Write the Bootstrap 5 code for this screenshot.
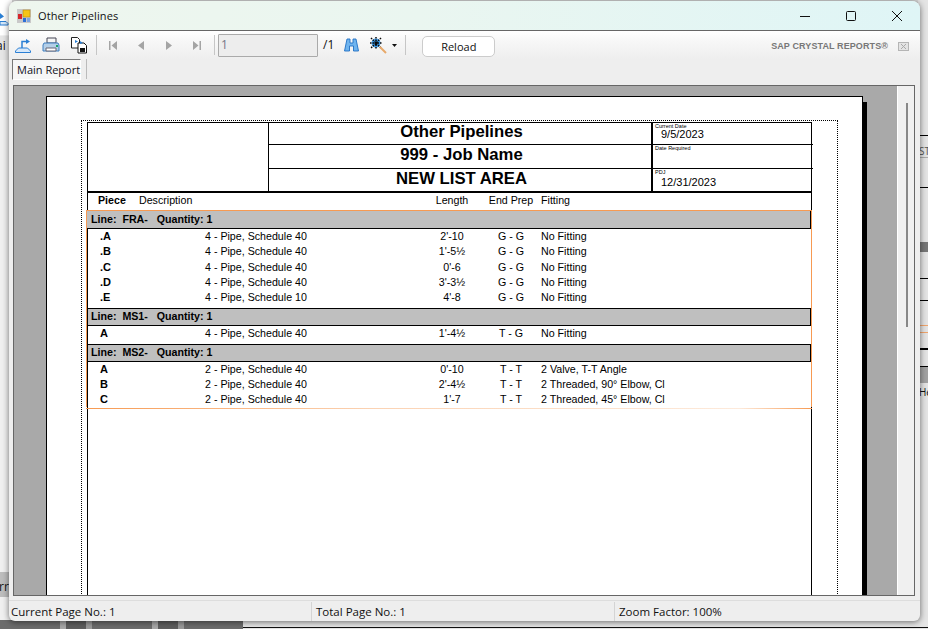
<!DOCTYPE html>
<html lang="en">
<head>
<meta charset="utf-8">
<title>Other Pipelines</title>
<link href="https://cdn.jsdelivr.net/npm/bootstrap@5.3.0/dist/css/bootstrap.min.css" rel="stylesheet">
<style>
html,body{margin:0;height:629px;overflow:hidden}
body{position:relative;width:928px;background:#d6d6d6;font-family:"Open Sans","Noto Sans",sans-serif;color:#111}
.desk-left{position:absolute;left:0;top:0;width:12px;height:629px;background:#f0f0f0;overflow:hidden}
.desk-left .seg{position:absolute;left:0;width:12px;font-size:12px;line-height:16px;overflow:hidden;white-space:nowrap}
.desk-right{position:absolute;right:0;top:0;width:10px;height:629px;background:#e4e4e4;overflow:hidden}
.desk-right i{position:absolute;left:0;width:10px;height:1px;background:#000;display:block}
.desk-right span{position:absolute;left:1px;font-size:10px;line-height:12px;white-space:nowrap}
.desk-bottom{position:absolute;left:0;right:0;top:620px;height:9px;background:linear-gradient(#e6e6e6 7px,#111 7px,#111 8px,#e6e6e6 8px)}
.desk-bottom-l{position:absolute;left:0;width:243px;top:620px;height:9px;background:repeating-linear-gradient(90deg,#6c6c6c 0 60px,#a8a8a8 60px 66px,#5e5e5e 66px 86px,#9a9a9a 86px 92px)}
.win{position:absolute;left:9px;top:1px;width:911px;height:620px;background:#eee;border-radius:8px 8px 6px 6px;overflow:hidden;box-shadow:0 1px 6px rgba(0,0,0,.55)}
.titlebar{height:30px;flex:none;background:linear-gradient(90deg,#eef6ee,#eaf6f0 45%,#dff5f6);border-bottom:1px solid #666;padding-left:8px;font-size:11px}
.appicon{width:14px;height:14px;margin-right:7px}
.titlebar .cap{line-height:30px;letter-spacing:.1px}
.wctl{width:46px;height:30px}
.tools{height:28px;flex:none;background:linear-gradient(#fff,#f7f7f7 35%,#eee);padding-left:4px;position:relative}
.ibtn{width:24px;height:24px;flex:none}
.tsep{width:1px;height:20px;background:#c6c6c6;flex:none}
.pageinput{width:100px;height:23px;margin-left:3px;border:1px solid #aaa;background:#ededed;color:#778;font-size:12px;line-height:20px;padding:0 2px;border-radius:1px;flex:none}
.pagetot{font-size:12px;margin:0 5px 0 5px;flex:none}
.btn.reload{width:73px;height:21px;margin:3px 0 0 16px;padding:0;background:#fff;border:1px solid #ccc;border-radius:5px;font:11px/19px "Open Sans",sans-serif;color:#111}
.brand{font:bold 9px/12px "Liberation Sans",sans-serif;color:#777;letter-spacing:.1px;white-space:nowrap;margin-top:2px}
.brand-x{width:11px;height:9px;margin:2px 11px 0 10px}
.tabrow{height:26px;flex:none;background:#eee;padding-left:3px;align-items:flex-start}
.maintab{width:69px;height:21px;border:1px solid #777;border-right-color:#fff;border-bottom-color:#fff;background:#f6f6f6;font-size:11px;line-height:19px;padding-left:4px;color:#112;white-space:nowrap}
.tabsep{width:1px;height:20px;background:#bbb;margin-left:5px}
.frame{height:511px;flex:none;margin:0 5px 0 4px;border:1px solid #666;background:#f0f0f0}
.canvas{width:884px;flex:none;background:#a9a9a9;border-right:1px solid #fff;padding:10px 0 0 32px;overflow:hidden}
.sbar{flex:1;padding-top:17px}
.sthumb{width:2px;height:224px;background:#888;margin-left:8px}
.sheet{width:817px;height:700px;background:#fff;border:1px solid #000;box-shadow:4px 6px 0 #000;padding:23px 0 0 34px;font-family:"Liberation Sans",Arial,sans-serif;color:#000;box-sizing:border-box}
.dots{width:757px;height:660px;border:1px dotted #000;padding:1px 0 0 5px}
.rep{width:725px;height:650px;border:solid #000;border-width:1px 1px 0 1px}
.rephead{height:70px;border-bottom:2px solid #000;display:grid;grid-template-columns:181px 384px 1fr;grid-template-rows:22px 24px 22px}
.hlogo{grid-row:1/4;border-right:1px solid #000}
.htitle{border-right:2px solid #000;border-bottom:1px solid #000;font-weight:700;font-size:16.7px;line-height:18px;text-align:center;white-space:nowrap;padding-left:3px}
.htitle.tall{line-height:20px}
.htitle.last{border-bottom:0;line-height:19px}
.hdate{position:relative;border-bottom:1px solid #000;margin-right:-2px}
.hdate.last{border-bottom:0;margin-right:0}
.hdate small{position:absolute;left:2px;top:0;font-size:5.5px;line-height:6px;white-space:nowrap}
.hdate b{position:absolute;left:8px;top:4px;font-weight:400;font-size:11px;line-height:14px}
.hdate.last b{top:6px}
.colhead{height:17px;font-size:10.67px;line-height:15px;display:grid;grid-template-columns:10px 41px 281px 64px 54px 1fr;white-space:nowrap}
.colhead b{font-weight:700}
.ctr{text-align:center}
.sect{margin-left:-2px;width:726px;border:solid #f79a52;border-width:1px 1px 0 1px}
.band{height:18px;background:#bfbfbf;border-bottom:1px solid #000;border-right:1px solid #000;font-weight:700;font-size:10.67px;line-height:17px;padding-left:4px;white-space:pre}
.band.ruled{border-top:1px solid #000;border-left:1px solid #000;line-height:15px;padding-left:3px}
.band.tail{height:18px}
.rw{height:15.25px;font-size:10.67px;line-height:15px;display:grid;grid-template-columns:118px 215px 64px 54px 1fr;white-space:nowrap}
.rw b{padding-left:13px;font-weight:700;font-size:11px}
.rw .fit{padding-left:3px}
.gap3{height:3px}
.gap2{height:2px}
.orange{height:1px;width:726px;margin-left:-2px;margin-top:1px;background:linear-gradient(90deg,#f79a52,#fbd3b4 40%,#fdeadb 90%,#f79a52)}
.status{flex:1;font-size:11.5px;margin-top:4px;border-top:1px solid #ddd}
.scell{height:19px;line-height:19px;padding-left:2px;border-right:1px solid #d4d4d4;margin-top:1px;white-space:nowrap}
.scell.a{width:303px}.scell.b{width:303px;padding-left:4px}.scell.c{flex:1;border:0;padding-left:4px}
</style>
</head>
<body>
<div class="desk-left">
  <div class="seg" style="top:0;height:35px;background:#fff">
    <svg width="9" height="16" viewBox="0 0 9 16" style="display:block;margin-top:11px"><path d="M0 14h8v-1.500l-2-2H0z" fill="#d6e8fa" stroke="#2a7fd4"/><path d="M0 2l4 3.500L0 8z" fill="#2a7fd4"/></svg>
  </div>
  <div class="seg" style="top:36px;height:24px;background:#e6e6e6">
    <span style="margin-left:-4px;line-height:20px">ai</span>
  </div>
  <div class="seg" style="top:572px;height:25px;background:#bdbdbd;line-height:30px"><span style="margin-left:-1px">rr</span></div>
</div>
<div class="desk-right">
  <i style="top:135px"></i><span style="top:145px;color:#555">ST</span><i style="top:157px;background:#aaa"></i><i style="top:187px"></i>
  <i style="top:242px;height:10px;background:#777"></i><i style="top:278px"></i><i style="top:300px"></i>
  <i style="top:325px;background:#f0a46b"></i><i style="top:332px;background:#f0a46b"></i><i style="top:348px;height:2px"></i>
  <i style="top:366px"></i><i style="top:367px;height:16px;background:#a2a2a2"></i><span style="top:386px">He</span>
</div>
<div class="desk-bottom"></div>
<div class="desk-bottom-l"></div>

<div class="win d-flex flex-column">
  <div class="titlebar d-flex align-items-center">
    <svg class="appicon" viewBox="0 0 14 14"><rect width="14" height="14" fill="#c9c9c9"/><rect x="6" y="1" width="7" height="7" fill="#f5c518" stroke="#b88a10" stroke-width=".6"/><rect x="1" y="5" width="4" height="5" fill="#d6262a"/><rect x="6" y="9" width="3" height="4" fill="#2b6fd6"/><rect x="10" y="9" width="3" height="4" fill="#7fa6e0"/></svg>
    <span class="cap flex-grow-1">Other Pipelines</span>
    <div class="wctl d-flex align-items-center justify-content-center"><svg width="12" height="12" viewBox="0 0 12 12"><path d="M1 6.500h10" stroke="#111" fill="none"/></svg></div>
    <div class="wctl d-flex align-items-center justify-content-center"><svg width="12" height="12" viewBox="0 0 12 12"><rect x="1.500" y="1.500" width="9" height="9" rx="1" stroke="#111" fill="none"/></svg></div>
    <div class="wctl d-flex align-items-center justify-content-center"><svg width="12" height="12" viewBox="0 0 12 12"><path d="M1 1l10 10M11 1L1 11" stroke="#111" fill="none"/></svg></div>
  </div>

  <div class="tools d-flex align-items-center">
    <div class="ibtn d-flex align-items-center justify-content-center" style="margin-left:-2px"><svg width="18" height="17" viewBox="0 0 18 17"><path d="M1.500 15.500h15v-1.500l-3-3h-9l-3 3z" fill="#d6e8fa" stroke="#2a7fd4"/><path d="M8 11V4.500h4" fill="none" stroke="#2a7fd4" stroke-width="1.500"/><path d="M12 2l4 2.500-4 2.500z" fill="#2a7fd4"/></svg></div>
    <div class="ibtn d-flex align-items-center justify-content-center" style="margin-left:4px"><svg width="18" height="16" viewBox="0 0 18 16"><path d="M5 1h9v5H5z" fill="#f6f6f6" stroke="#445"/><path d="M2 6h14l1 2v6H1V8z" fill="#b4cfe8" stroke="#3f7fbf"/><path d="M4 11h10v3H4z" fill="#fff" stroke="#667"/><rect x="14" y="8" width="2" height="2" fill="#1aa36a"/></svg></div>
    <div class="ibtn d-flex align-items-center justify-content-center" style="margin-left:4px"><svg width="18" height="18" viewBox="0 0 18 18"><path d="M1.500 1.500h6l2 2V12h-8z" fill="#fff" stroke="#222"/><path d="M8 7h6l2.500 2.500V17H8z" fill="#fff" stroke="#111"/><path d="M10 12h5v4h-5z" fill="#111"/><path d="M5 4l3 1.500L5 7z" fill="#2a7fd4"/><path d="M10 5l3 2-3 1z" fill="#2a7fd4"/></svg></div>
    <div class="tsep" style="margin-left:5px"></div>
    <div class="ibtn d-flex align-items-center justify-content-center" style="margin-left:2px;width:28px"><svg width="8" height="9" viewBox="0 0 8 9"><path d="M0 0h1.500v9H0zM8 0v9L2.500 4.500z" fill="#a4a4a4"/></svg></div>
    <div class="ibtn d-flex align-items-center justify-content-center" style="width:27px"><svg width="6" height="9" viewBox="0 0 6 9"><path d="M6 0v9L0 4.500z" fill="#a4a4a4"/></svg></div>
    <div class="ibtn d-flex align-items-center justify-content-center" style="width:29px"><svg width="6" height="9" viewBox="0 0 6 9"><path d="M0 0v9l6-4.500z" fill="#a4a4a4"/></svg></div>
    <div class="ibtn d-flex align-items-center justify-content-center" style="width:28px"><svg width="8" height="9" viewBox="0 0 8 9"><path d="M0 0v9l5.500-4.500zM6.500 0H8v9H6.500z" fill="#a4a4a4"/></svg></div>
    <div class="tsep" style="margin-left:3px"></div>
    <div class="pageinput">1</div>
    <div class="pagetot">/1</div>
    <div class="ibtn d-flex align-items-center justify-content-center"><svg width="15" height="14" viewBox="0 0 15 14"><path d="M3 1h3v4h3V1h3l2.500 12H9.500V8h-4v5H.5z" fill="#6fb4ee" stroke="#1f6fc4" stroke-width=".9"/></svg></div>
    <div class="ibtn d-flex align-items-center justify-content-center" style="margin-left:3px;margin-right:-2px"><svg width="17" height="17" viewBox="0 0 17 17"><circle cx="6" cy="6" r="4.500" fill="#3c9be8"/><path d="M1 1l10 10M11 1L1 11M6 0v12M0 6h12" stroke="#0a0a0a" stroke-width="1.500" stroke-dasharray="1.500 1"/><path d="M10 10l6 6" stroke="#e8a96a" stroke-width="2"/></svg></div>
    <svg width="5" height="3" viewBox="0 0 5 3" class="ms-1"><path d="M0 0h5L2.500 3z" fill="#111"/></svg>
    <div class="tsep" style="margin-left:8px"></div>
    <button type="button" class="btn reload">Reload</button>
    <div class="flex-grow-1"></div>
    <span class="brand">SAP CRYSTAL REPORTS&#174;</span>
    <svg class="brand-x" viewBox="0 0 11 9"><rect x=".5" y=".5" width="10" height="8" fill="#e4e4e4" stroke="#b5b5b5"/><path d="M3 2l5 5M8 2L3 7" stroke="#aaa"/></svg>
  </div>

  <div class="tabrow d-flex">
    <div class="maintab">Main Report</div>
    <div class="tabsep"></div>
  </div>

  <div class="frame d-flex">
    <div class="canvas">
      <div class="sheet">
        <div class="dots">
          <div class="rep">
            <div class="rephead">
              <div class="hlogo"></div>
              <div class="htitle">Other Pipelines</div>
              <div class="hdate"><small>Current Date</small><b>9/5/2023</b></div>
              <div class="htitle tall">999 - Job Name</div>
              <div class="hdate"><small>Date Required</small></div>
              <div class="htitle last">NEW LIST AREA</div>
              <div class="hdate last"><small>PDJ</small><b>12/31/2023</b></div>
            </div>
            <div class="colhead">
              <span></span><b>Piece</b><span>Description</span><span class="ctr">Length</span><span class="ctr">End Prep</span><span style="padding-left:3px">Fitting</span>
            </div>
            <div class="sect">
              <div class="band">Line:  FRA-   Quantity: 1</div>
              <div class="rw"><b>.A</b><span>4 - Pipe, Schedule 40</span><span class="ctr">2'-10</span><span class="ctr">G - G</span><span class="fit">No Fitting</span></div>
              <div class="rw"><b>.B</b><span>4 - Pipe, Schedule 40</span><span class="ctr">1'-5&#189;</span><span class="ctr">G - G</span><span class="fit">No Fitting</span></div>
              <div class="rw"><b>.C</b><span>4 - Pipe, Schedule 40</span><span class="ctr">0'-6</span><span class="ctr">G - G</span><span class="fit">No Fitting</span></div>
              <div class="rw"><b>.D</b><span>4 - Pipe, Schedule 40</span><span class="ctr">3'-3&#189;</span><span class="ctr">G - G</span><span class="fit">No Fitting</span></div>
              <div class="rw"><b>.E</b><span>4 - Pipe, Schedule 10</span><span class="ctr">4'-8</span><span class="ctr">G - G</span><span class="fit">No Fitting</span></div>
              <div class="gap3"></div>
              <div class="band ruled">Line:  MS1-   Quantity: 1</div>
              <div class="rw"><b>A</b><span>4 - Pipe, Schedule 40</span><span class="ctr">1'-4&#189;</span><span class="ctr">T - G</span><span class="fit">No Fitting</span></div>
              <div class="gap2"></div>
              <div class="band ruled tail">Line:  MS2-   Quantity: 1</div>
              <div class="rw"><b>A</b><span>2 - Pipe, Schedule 40</span><span class="ctr">0'-10</span><span class="ctr">T - T</span><span class="fit">2 Valve, T-T Angle</span></div>
              <div class="rw"><b>B</b><span>2 - Pipe, Schedule 40</span><span class="ctr">2'-4&#189;</span><span class="ctr">T - T</span><span class="fit">2 Threaded, 90&#176; Elbow, Cl</span></div>
              <div class="rw"><b>C</b><span>2 - Pipe, Schedule 40</span><span class="ctr">1'-7</span><span class="ctr">T - T</span><span class="fit">2 Threaded, 45&#176; Elbow, Cl</span></div>
            </div>
            <div class="orange"></div>
          </div>
        </div>
      </div>
    </div>
    <div class="sbar"><div class="sthumb"></div></div>
  </div>

  <div class="status d-flex">
    <div class="scell a">Current Page No.: 1</div>
    <div class="scell b">Total Page No.: 1</div>
    <div class="scell c">Zoom Factor: 100%</div>
  </div>
</div>
<script src="https://cdn.jsdelivr.net/npm/bootstrap@5.3.0/dist/js/bootstrap.bundle.min.js"></script>
</body>
</html>
